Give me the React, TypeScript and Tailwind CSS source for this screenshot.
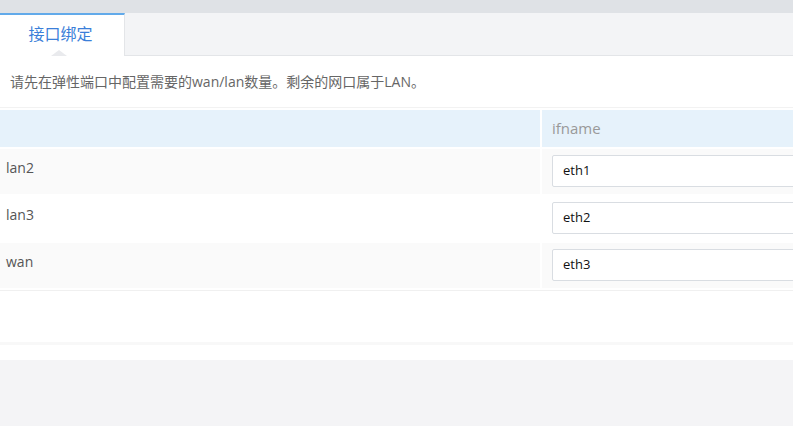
import React from "react";

const rows = [
  { name: "lan2", value: "eth1", alt: true },
  { name: "lan3", value: "eth2", alt: false },
  { name: "wan", value: "eth3", alt: true },
];

export default function App() {
  return (
    <div
      className="w-[793px] h-[426px] overflow-hidden bg-[#f4f4f6] flex flex-col"
      style={{ fontFamily: '"Open Sans", "Noto Sans CJK SC", sans-serif' }}
    >
      <div className="h-[13px] bg-[#dfe2e6] shrink-0" />
      <div className="h-[43px] shrink-0 flex bg-[#f3f4f6] border-b border-[#e3e5e8]">
        <div className="relative w-[125px] -mb-px bg-white border-t-2 border-t-[#62aaea] border-r border-r-[#e3e5e8] flex items-center justify-center text-[16px] text-[#3b7fd9]">
          <span className="-mt-[4px] -ml-[3px]">接口绑定</span>
          <div className="absolute left-[51px] bottom-0 w-0 h-0 border-l-[8px] border-r-[8px] border-b-[6px] border-l-transparent border-r-transparent border-b-[#e9eaed]" />
        </div>
      </div>
      <div className="bg-white shrink-0 h-[304px] flex flex-col">
        <div className="h-[51px] flex items-center px-[10px] text-[14px] text-[#666]">
          请先在弹性端口中配置需要的wan/lan数量。剩余的网口属于LAN。
        </div>
        <div className="border-t border-[#f2f2f2] pt-[2px] flex flex-col gap-[2px]">
          <div className="h-[37px] flex gap-[2px]">
            <div className="w-[540px] shrink-0 bg-[#e6f2fb]" />
            <div className="flex-1 min-w-0 bg-[#e6f2fb] flex items-center pl-[10px] text-[15px] text-[#999]">
              ifname
            </div>
          </div>
          {rows.map((r) => (
            <div key={r.name} className="h-[45px] flex gap-[2px]">
              <div
                className={`w-[540px] shrink-0 pl-[6px] pt-[8px] text-[14px] text-[#555] ${
                  r.alt ? "bg-[#fafafa]" : "bg-white"
                }`}
              >
                {r.name}
              </div>
              <div
                className={`flex-1 min-w-0 overflow-hidden pl-[10px] pt-[6px] ${
                  r.alt ? "bg-[#fafafa]" : "bg-white"
                }`}
              >
                <div className="w-[300px] h-[32px] bg-white border border-[#d9dde2] rounded-[2px] flex items-center pl-[10px] text-[13px] text-[#111]">
                  {r.value}
                </div>
              </div>
            </div>
          ))}
        </div>
        <div className="mt-[2px] border-t border-[#f0f0f0] h-[52px]" />
        <div className="h-[3px] bg-[#f8f8f8]" />
      </div>
    </div>
  );
}
